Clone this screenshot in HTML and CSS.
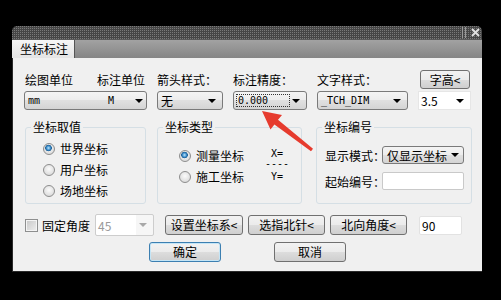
FILE: index.html
```html
<!DOCTYPE html>
<html lang="zh-CN">
<head>
    <meta charset="UTF-8">
    <meta name="viewport" content="width=device-width, initial-scale=1.0">
    <title>坐标标注</title>
    <link rel="stylesheet" href="styles.css">
</head>
<body>
    <div class="dialog">
        <!-- 标题栏 -->
        <div class="titlebar">
            <span class="grip"></span>
            <svg class="close" width="9" height="9" viewBox="0 0 9 9"><path d="M1 1 L8 8 M8 1 L1 8"/></svg>
        </div>
        <div class="tabs"><span class="tab">坐标标注</span></div>

        <div class="content">
            <!-- 上部参数 -->
            <div class="params">
                <div class="label pair"><span>绘图单位</span><span>标注单位</span></div>
                <div class="label">箭头样式：</div>
                <div class="label">标注精度：</div>
                <div class="label">文字样式：</div>
                <button class="btn btn-height">字高&lt;</button>

                <div class="combo"><span class="mono">mm</span><span class="mono unit">M</span><i class="arrow"></i></div>
                <div class="combo"><span>无</span><i class="arrow"></i></div>
                <div class="combo"><span class="mono focus">0.000</span><i class="arrow"></i></div>
                <div class="combo"><span class="mono">_TCH_DIM</span><i class="arrow"></i></div>
                <div class="combo edit"><span>3.5</span><i class="arrow"></i></div>
            </div>

            <!-- 分组 -->
            <div class="groups">
                <div class="group g1">
                    <span class="group-title">坐标取值</span>
                    <div class="group-body">
                        <div class="radio"><i class="dot on"></i>世界坐标</div>
                        <div class="radio"><i class="dot"></i>用户坐标</div>
                        <div class="radio"><i class="dot"></i>场地坐标</div>
                    </div>
                </div>

                <div class="group g2">
                    <span class="group-title">坐标类型</span>
                    <div class="group-body">
                        <div class="radios">
                            <div class="radio"><i class="dot on"></i>测量坐标</div>
                            <div class="radio"><i class="dot"></i>施工坐标</div>
                        </div>
                        <div class="xy mono">
                            <div class="xy-x">X=</div>
                            <div class="xy-line">----</div>
                            <div class="xy-y">Y=</div>
                        </div>
                    </div>
                </div>

                <div class="group g3">
                    <span class="group-title">坐标编号</span>
                    <div class="group-body">
                        <div class="field">
                            <span class="field-label">显示模式：</span>
                            <div class="combo mode"><span>仅显示坐标</span><i class="arrow"></i></div>
                        </div>
                        <div class="field">
                            <span class="field-label">起始编号：</span>
                            <div class="input start-no"></div>
                        </div>
                    </div>
                </div>
            </div>

            <!-- 固定角度 与 按钮 -->
            <div class="row-angle">
                <i class="check"></i>
                <span class="check-label">固定角度</span>
                <div class="combo disabled"><span>45</span><i class="arrow"></i></div>
                <button class="btn btn-ucs">设置坐标系&lt;</button>
                <button class="btn btn-north">选指北针&lt;</button>
                <button class="btn btn-north">北向角度&lt;</button>
                <div class="input angle">90</div>
            </div>

            <div class="row-actions">
                <button class="btn btn-ok">确定</button>
                <button class="btn btn-cancel">取消</button>
            </div>
        </div>
    </div>

    <!-- 红色箭头 -->
    <svg class="pointer" width="501" height="300" viewBox="0 0 501 300">
        <polygon points="262,111 282,115 278,119.7 313,148.8 311,151.2 274.4,124.5 270.5,129.5"/>
    </svg>
</body>
</html>
```

FILE: styles.css
```css
/* 页面 */
body {
    margin: 0;
    background-color: #000;
    font-family: "Noto Sans CJK SC", sans-serif;
    font-size: 12px;
    color: #000;
    position: relative;
    height: 300px;
    overflow: hidden;
}

.mono {
    font-family: "DejaVu Sans Mono", monospace;
    font-size: 10px;
}

/* 对话框 */
.dialog {
    width: 470px;
    margin: 26px 0 0 12px;
}

.titlebar {
    height: 13px;
    border-radius: 5px 5px 0 0;
    background:
        linear-gradient(90deg, transparent 1px, #464646 1px) 0 0 / 2px 2px,
        linear-gradient(transparent 1px, #464646 1px) 0 0 / 2px 2px,
        #7a7a7a;
    display: flex;
    justify-content: flex-end;
    align-items: center;
    padding-right: 2px;
}
.grip {
    width: 2px;
    height: 11px;
    border-left: 1px solid #9a9a9a;
    border-right: 1px solid #9a9a9a;
    margin-right: 5px;
}
.close path {
    stroke: #dedede;
    stroke-width: 2;
}

.tabs {
    height: 19px;
    background: linear-gradient(#a2a2a2, #858585);
    border-top: 1px solid #5a5a5a;
    box-sizing: border-box;
    display: flex;
}
.tab {
    width: 63px;
    padding-left: 8px;
    box-sizing: border-box;
    background: linear-gradient(#f6f6f6, #e4e4e4);
    border-right: 1px solid #555;
    line-height: 18px;
}

.content {
    background-color: #f0f0f0;
    height: 214px;
    box-sizing: border-box;
    padding: 12px 0 0 11px;
    border-left: 1px solid #2a2a2a;
    border-bottom: 1px solid #2a2a2a;
}

/* 上部参数 */
.params {
    display: grid;
    grid-template-columns: 123px 66px 74px 91px 53px;
    grid-template-rows: 19px 19px;
    column-gap: 10px;
    row-gap: 2px;
}
.label {
    line-height: 19px;
    white-space: nowrap;
}
.pair {
    display: flex;
    justify-content: space-between;
    padding: 0 2px 0 1px;
}

/* 按钮 */
.btn {
    font-family: inherit;
    font-size: 12px;
    height: 20px;
    padding: 0;
    border: 1px solid #707070;
    border-radius: 3px;
    background: linear-gradient(#f2f2f2 0%, #ebebeb 50%, #dddddd 50%, #cfcfcf 100%);
    color: #000;
    line-height: 18px;
}
.btn-height {
    width: 50px;
    height: 19px;
    margin-left: 2px;
}

/* 下拉框 */
.combo {
    display: flex;
    align-items: center;
    height: 19px;
    box-sizing: border-box;
    padding: 0 6px 0 3px;
    border: 1px solid #7a7a7a;
    border-radius: 3px;
    background: linear-gradient(#f4f4f4 0%, #ececec 50%, #e0e0e0 50%, #d4d4d4 100%);
    line-height: 17px;
    white-space: nowrap;
}
.arrow {
    margin-left: auto;
    width: 0;
    height: 0;
    border-left: 4px solid transparent;
    border-right: 4px solid transparent;
    border-top: 4px solid #000;
}
.combo .unit {
    margin-left: 68px;
}
.combo .unit + .arrow {
    margin-left: 21px;
}
.focus {
    width: 54px;
    box-sizing: border-box;
    border: 1px dotted #333;
    line-height: 11px;
    padding-left: 1px;
    margin-left: -1px;
}
.combo.edit {
    background: #fff;
    border-color: #e6e6e6;
    border-radius: 0;
    padding-left: 2px;
}

/* 分组 */
.groups {
    display: flex;
    margin-top: 17px;
    padding-left: 1px;
}
.group {
    height: 77px;
    box-sizing: border-box;
    border: 1px solid #d5dfe5;
    border-radius: 3px;
}
.group-title {
    display: block;
    width: fit-content;
    margin: -8px 0 0 5px;
    padding: 0 2px;
    background-color: #f0f0f0;
    line-height: 14px;
}
.g1 {
    width: 121px;
}
.g1 .group-body {
    padding: 4px 0 0 17px;
}
.g2 {
    width: 145px;
    margin-left: 11px;
}
.g2 .group-body {
    display: flex;
    padding: 11px 11px 0 21px;
}
.g3 {
    width: 156px;
    margin-left: 14px;
}
.g3 .group-body {
    padding: 12px 0 0 8px;
}

.radio {
    display: flex;
    align-items: center;
    height: 21px;
    gap: 5px;
    white-space: nowrap;
}
.dot {
    width: 12px;
    height: 12px;
    box-sizing: border-box;
    border-radius: 50%;
    border: 1px solid #8d8d8d;
    background: radial-gradient(circle at 50% 40%, #fbfbfb, #d2d2d2);
}
.dot.on {
    background:
        radial-gradient(circle at 45% 40%, #bfe6fb 0, #3f8fcc 2px, #1a5d94 3px, transparent 3.6px),
        radial-gradient(circle at 50% 40%, #fbfbfb, #d2d2d2);
}

.xy {
    margin-left: auto;
    width: 26px;
    text-align: center;
    white-space: nowrap;
    padding-top: 4px;
}
.xy-x { line-height: 10px; }
.xy-line { line-height: 10px; }
.xy-y { line-height: 16px; }

.field {
    display: flex;
    align-items: center;
    height: 18px;
    margin-bottom: 8px;
}
.field-label {
    width: 57px;
    white-space: nowrap;
}
.combo.mode {
    width: 82px;
    height: 18px;
    padding: 0 4px 0 4px;
}

.input {
    background: #fff;
    border: 1px solid #c9c9c9;
    border-radius: 2px;
    box-sizing: border-box;
}
.start-no {
    width: 82px;
    height: 18px;
}

/* 固定角度行 */
.row-angle {
    display: flex;
    align-items: center;
    height: 22px;
    margin-top: 10px;
    padding-left: 1px;
}
.check {
    width: 13px;
    height: 13px;
    box-sizing: border-box;
    border: 1px solid #8e8f8f;
    background: linear-gradient(135deg, #c6c6c6, #efefef);
    box-shadow: inset 0 0 0 1px #f4f4f4;
}
.check-label {
    margin-left: 4px;
}
.combo.disabled {
    width: 59px;
    height: 22px;
    margin-left: 5px;
    background: linear-gradient(90deg, #fff 40px, #f6f6f6 40px);
    border-color: #cdcdcd;
    border-radius: 2px;
    color: #9a9a9a;
    padding-left: 2px;
}
.combo.disabled .arrow {
    border-top-color: #a8a8a8;
}
.btn-ucs {
    width: 78px;
    margin-left: 11px;
}
.btn-north {
    width: 77px;
    margin-left: 5px;
}
.angle {
    width: 43px;
    height: 19px;
    margin-left: 12px;
    border-color: #e2e2e2;
    padding-left: 2px;
    line-height: 17px;
}

/* 确定 取消 */
.row-actions {
    display: flex;
    margin-top: 6px;
    padding-left: 125px;
}
.btn-ok {
    width: 72px;
    border-color: #3c7fb1;
    box-shadow: inset 0 0 0 1px #c4e5f6;
}
.btn-cancel {
    width: 72px;
    margin-left: 53px;
}

/* 红色箭头 */
.pointer {
    position: absolute;
    left: 0;
    top: 0;
    pointer-events: none;
}
.pointer polygon {
    fill: #e63b2e;
}
```
